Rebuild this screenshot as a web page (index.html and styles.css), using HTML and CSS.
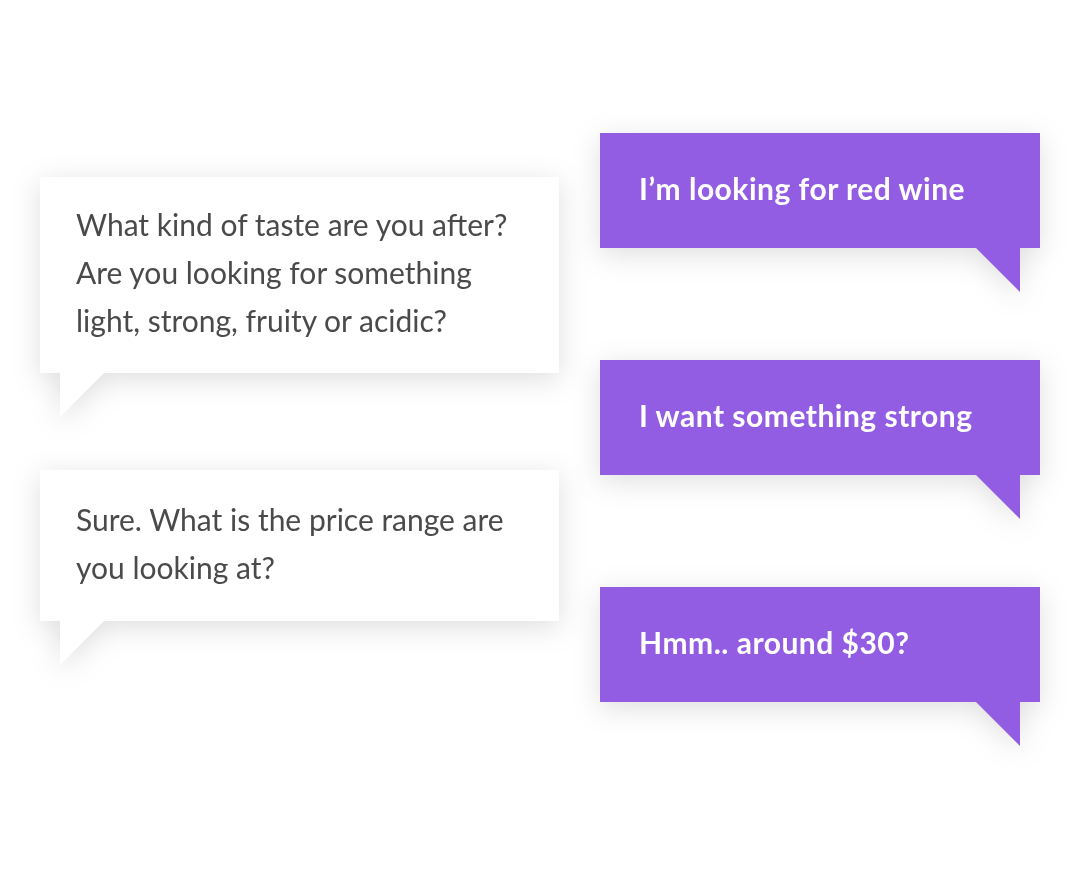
FILE: index.html
```html
<!DOCTYPE html>
<html lang="en">
<head>
<meta charset="utf-8">
<title>Chat</title>
<link rel="stylesheet" href="styles.css">
</head>
<body>
<main class="chat">
  <section class="col col-left">
    <div class="msg msg-in">
      <div class="box">What kind of taste are you after?<br>Are you looking for something<br>light, strong, fruity or acidic?</div>
      <div class="tail"></div>
    </div>
    <div class="msg msg-in msg-in-2">
      <div class="box">Sure. What is the price range are<br>you looking at?</div>
      <div class="tail"></div>
    </div>
  </section>
  <section class="col col-right">
    <div class="msg msg-out">
      <div class="box">I’m looking for red wine</div>
      <div class="tail"></div>
    </div>
    <div class="msg msg-out">
      <div class="box">I want something strong</div>
      <div class="tail"></div>
    </div>
    <div class="msg msg-out">
      <div class="box">Hmm.. around $30?</div>
      <div class="tail"></div>
    </div>
  </section>
</main>
</body>
</html>
```
FILE: styles.css
```css
html, body {
  margin: 0;
  padding: 0;
  background: #ffffff;
}
body {
  font-family: "Lato", "Liberation Sans", sans-serif;
  width: 1080px;
  height: 880px;
  overflow: hidden;
}
.chat {
  display: flex;
  align-items: flex-start;
  padding-left: 40px;
  gap: 41px;
}
.col {
  display: flex;
  flex-direction: column;
}
.col-left {
  width: 519px;
  margin-top: 177px;
  gap: 53px;
}
.col-right {
  width: 440px;
  margin-top: 133px;
  gap: 68px;
}
.msg {
  display: flex;
  flex-direction: column;
  filter: drop-shadow(0 6px 14px rgba(0, 0, 0, 0.13));
}
.box {
  box-sizing: border-box;
}
.tail {
  width: 44px;
  height: 44px;
}
.msg-in .box {
  background: #ffffff;
  color: #4a4a4a;
  font-size: 30px;
  line-height: 48px;
  padding: 23px 36px 29px;
}
.msg-in-2 .box {
  padding-top: 25px;
  padding-bottom: 30px;
}
.msg-in .tail {
  background: #ffffff;
  margin-left: 20px;
  clip-path: polygon(0 0, 100% 0, 0 100%);
}
.msg-out .box {
  background: #925de3;
  color: #ffffff;
  font-size: 30px;
  font-weight: 700;
  letter-spacing: 0.5px;
  line-height: 49px;
  height: 115px;
  padding: 31px 39px;
}
.msg-out .tail {
  background: #925de3;
  align-self: flex-end;
  margin-right: 20px;
  clip-path: polygon(0 0, 100% 0, 100% 100%);
}
```
